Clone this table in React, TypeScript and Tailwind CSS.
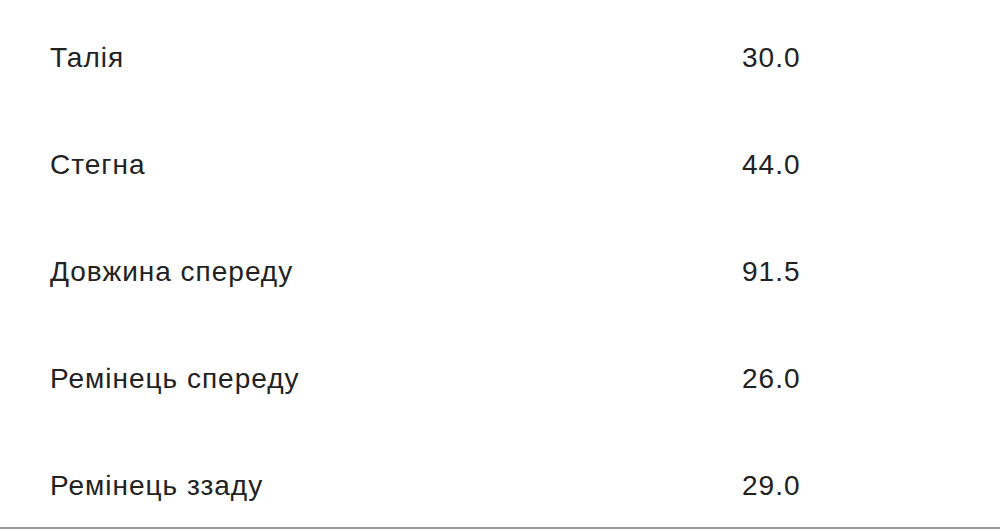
const rows = [
  { label: "Талія", value: "30.0" },
  { label: "Стегна", value: "44.0" },
  { label: "Довжина спереду", value: "91.5" },
  { label: "Ремінець спереду", value: "26.0" },
  { label: "Ремінець ззаду", value: "29.0" },
]

export default function App() {
  return (
    <div className="w-[1000px] h-[529px] bg-white overflow-hidden font-['Liberation_Sans',Arial,sans-serif] text-[#222]">
      <div className="flex flex-col gap-[75px] pt-[42px] pb-[25px] pl-[50px] border-b-2 border-[#9a9a9a]">
        {rows.map((row) => (
          <div key={row.label} className="flex items-center h-[32px] text-[28px] leading-[32px] tracking-[1px]">
            <span className="w-[692px]">{row.label}</span>
            <span>{row.value}</span>
          </div>
        ))}
      </div>
    </div>
  )
}
